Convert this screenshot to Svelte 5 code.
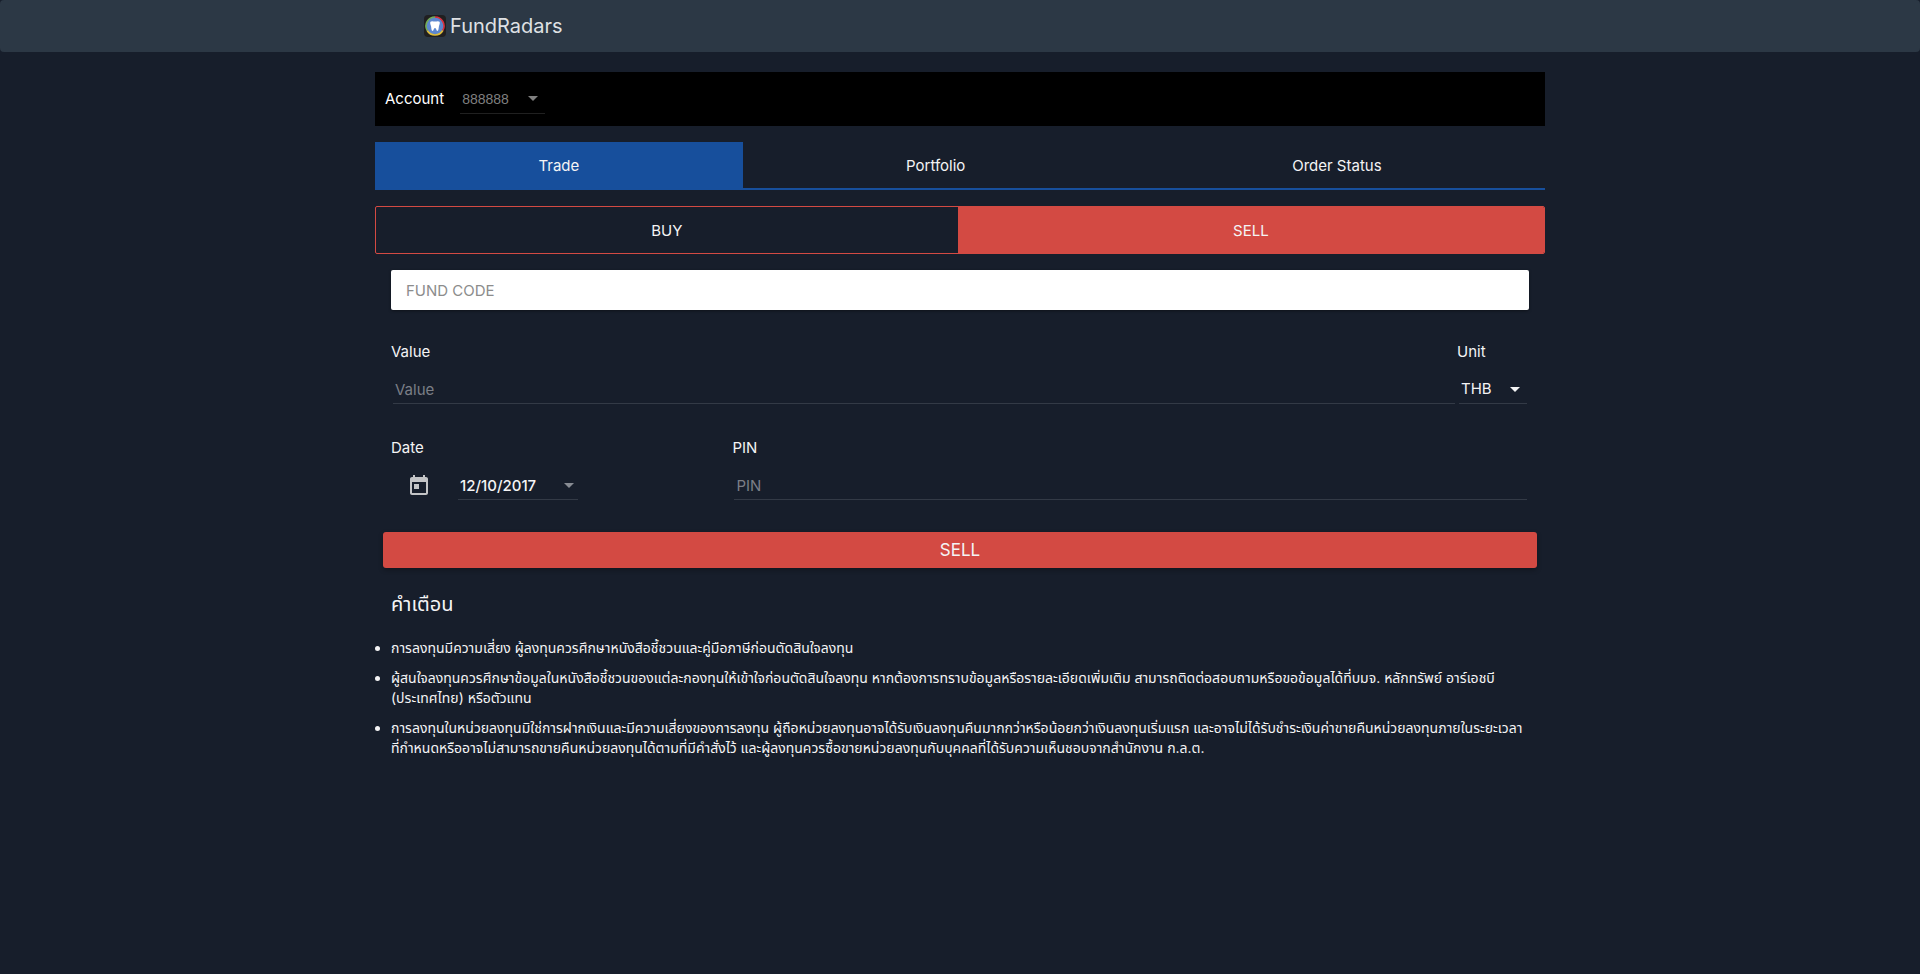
<script>
	let account = $state('888888');
	let tab = $state('Trade');
	let side = $state('SELL');
	let fundCode = $state('');
	let value = $state('');
	let unit = $state('THB');
	let date = $state('12/10/2017');
	let pin = $state('');

	const tabs = ['Trade', 'Portfolio', 'Order Status'];
	const sides = ['BUY', 'SELL'];
	const warnings = [
		['การลงทุนมีความเสี่ยง ผู้ลงทุนควรศึกษาหนังสือชี้ชวนและคู่มือภาษีก่อนตัดสินใจลงทุน'],
		[
			'ผู้สนใจลงทุนควรศึกษาข้อมูลในหนังสือชี้ชวนของแต่ละกองทุนให้เข้าใจก่อนตัดสินใจลงทุน หากต้องการทราบข้อมูลหรือรายละเอียดเพิ่มเติม สามารถติดต่อสอบถามหรือขอข้อมูลได้ที่บมจ. หลักทรัพย์ อาร์เอชบี',
			'(ประเทศไทย) หรือตัวแทน'
		],
		[
			'การลงทุนในหน่วยลงทุนมิใช่การฝากเงินและมีความเสี่ยงของการลงทุน ผู้ถือหน่วยลงทุนอาจได้รับเงินลงทุนคืนมากกว่าหรือน้อยกว่าเงินลงทุนเริ่มแรก และอาจไม่ได้รับชำระเงินค่าขายคืนหน่วยลงทุนภายในระยะเวลา',
			'ที่กำหนดหรืออาจไม่สามารถขายคืนหน่วยลงทุนได้ตามที่มีคำสั่งไว้ และผู้ลงทุนควรซื้อขายหน่วยลงทุนกับบุคคลที่ได้รับความเห็นชอบจากสำนักงาน ก.ล.ต.'
		]
	];
</script>

<header>
	<div class="container">
		<a class="brand" href="/">
			<svg width="22" height="22" viewBox="0 0 22 22" aria-hidden="true">
				<rect width="22" height="22" rx="4" fill="#201f20" />
				<circle cx="11" cy="11" r="9" fill="#5c87cf" />
				<g fill="none" stroke-width="1.6">
					<path d="M11 2a9 9 0 0 1 7.8 13.5" stroke="#d8303f" />
					<path d="M18.8 15.5a9 9 0 0 1-15.6 0" stroke="#dfbd3b" />
					<path d="M3.2 15.5A9 9 0 0 1 11 2" stroke="#74ad58" />
				</g>
				<path
					d="M6.5 6.8C7.5 5.6 9.5 6.4 11 6.6c1.500-.2 3.500-1 4.500.2.900 1.400-.3 3.200-.6 4.700-.2 1.400-.4 4.500-1.500 4.500-1.200 0-.9-3-2.400-3s-1.200 3-2.400 3c-1.100 0-1.300-3.100-1.500-4.500-.3-1.500-1.500-3.300-.6-4.700z"
					fill="#fff"
				/>
			</svg>
			<span>FundRadars</span>
		</a>
	</div>
</header>

<main class="container">
	<div class="account">
		<label for="account">Account</label>
		<div class="select muted">
			<select id="account" bind:value={account}>
				<option>888888</option>
			</select>
			<svg class="caret" viewBox="0 0 10 5" aria-hidden="true"><path d="M0 0h10L5 5z" /></svg>
		</div>
	</div>

	<nav class="tabs">
		{#each tabs as name}
			<button class:active={tab === name} onclick={() => (tab = name)}>{name}</button>
		{/each}
	</nav>

	<div class="sides">
		{#each sides as name}
			<button class:active={side === name} onclick={() => (side = name)}>{name}</button>
		{/each}
	</div>

	<form onsubmit={(e) => e.preventDefault()}>
		<input class="fund" type="text" aria-label="Fund code" placeholder="FUND CODE" bind:value={fundCode} />

		<div class="row">
			<div class="field grow">
				<label for="value">Value</label>
				<input class="line" id="value" type="text" placeholder="Value" bind:value />
			</div>
			<div class="field unit">
				<label for="unit">Unit</label>
				<div class="select">
					<select id="unit" bind:value={unit}>
						<option>THB</option>
						<option>Unit</option>
					</select>
					<svg class="caret" viewBox="0 0 10 5" aria-hidden="true"><path d="M0 0h10L5 5z" /></svg>
				</div>
			</div>
		</div>

		<div class="row">
			<div class="field date">
				<label for="date">Date</label>
				<div class="picker">
					<button type="button" class="calendar" aria-label="Open calendar">
						<svg width="24" height="24" viewBox="0 0 24 24" aria-hidden="true">
							<path
								d="M19 3h-1V1h-2v2H8V1H6v2H5c-1.110 0-1.990.9-1.990 2L3 19c0 1.100.890 2 2 2h14c1.100 0 2-.9 2-2V5c0-1.100-.9-2-2-2zm0 16H5V8h14v11zM7 10h5v5H7z"
							/>
						</svg>
					</button>
					<div class="select day">
						<input id="date" type="text" bind:value={date} />
						<svg class="caret" viewBox="0 0 10 5" aria-hidden="true"><path d="M0 0h10L5 5z" /></svg>
					</div>
				</div>
			</div>
			<div class="field grow">
				<label for="pin">PIN</label>
				<input class="line" id="pin" type="password" placeholder="PIN" bind:value={pin} />
			</div>
		</div>

		<button class="submit">{side}</button>
	</form>

	<section>
		<h2>คำเตือน</h2>
		<ul>
			{#each warnings as lines}
				<li>
					{#each lines as line}<span>{line}</span>{/each}
				</li>
			{/each}
		</ul>
	</section>
</main>

<style>
	:global(body) {
		background: #171e2b;
	}

	header,
	main {
		color: #f4f4f5;
		font-family: Inter, 'Noto Sans Thai', 'Noto Sans', sans-serif;
		font-size: 15px;
		line-height: 20px;
	}

	header {
		background: #2c3845;
		border-radius: 4px;
	}

	.container {
		max-width: 1170px;
		margin: 0 auto;
	}

	.brand {
		display: inline-flex;
		align-items: center;
		gap: 4px;
		height: 52px;
		margin-left: 49px;
		color: #dfe1e4;
		font-size: 20px;
		text-decoration: none;
	}

	button,
	input,
	select {
		box-sizing: border-box;
		margin: 0;
		padding: 0;
		border: 0;
		border-radius: 0;
		outline: 0;
		background: none;
		color: inherit;
		font: inherit;
	}

	button {
		cursor: pointer;
	}

	.account {
		display: flex;
		align-items: center;
		gap: 16px;
		height: 54px;
		margin-top: 20px;
		padding: 0 10px;
		background: #000;
		color: #fff;
	}

	.select {
		display: flex;
		align-items: center;
		height: 28px;
		border-bottom: 1px solid #333a46;
	}

	.select select,
	.select input {
		flex: 1;
		min-width: 0;
		height: 28px;
		margin-right: -20px;
		padding: 0 24px 0 2px;
		appearance: none;
	}

	.caret {
		flex: none;
		width: 10px;
		height: 5px;
		margin-right: 7px;
		fill: currentColor;
		pointer-events: none;
	}

	.muted {
		width: 85px;
		border-color: #202020;
		color: #7f7f7f;
		font-family: 'Liberation Sans', Arial, sans-serif;
		font-size: 14px;
	}

	.tabs,
	.sides {
		display: flex;
		height: 48px;
		margin-top: 16px;
	}

	.tabs {
		box-sizing: border-box;
		border-bottom: 2px solid #174f9c;
	}

	.sides {
		box-sizing: border-box;
		overflow: hidden;
		border: 1px solid #d34a43;
		border-radius: 2px;
	}

	.tabs button,
	.sides button {
		flex: 1 1 auto;
		padding-top: 2px;
	}

	.tabs .active {
		background: #174f9c;
	}

	.sides .active {
		background: #d34a43;
	}

	form {
		padding: 16px 8px 0;
	}

	.fund {
		display: block;
		width: calc(100% - 16px);
		height: 40px;
		margin: 0 8px;
		padding: 0 15px;
		border-radius: 2px;
		background: #fff;
		color: #333;
		box-shadow: 0 1px 3px rgba(0, 0, 0, 0.4);
	}

	.fund::placeholder {
		color: #8c8c8c;
	}

	.row {
		display: flex;
		padding: 32px 8px 0;
	}

	.row + .row {
		padding-top: 34px;
	}

	.field > label {
		display: block;
		margin-bottom: 13px;
	}

	.grow {
		flex: 1;
	}

	.line {
		display: block;
		width: calc(100% - 4px);
		height: 29px;
		margin: 0 2px;
		padding: 0 2px;
		border-bottom: 1px solid #333a46;
	}

	.line::placeholder {
		color: #7b7f87;
		opacity: 1;
	}

	.unit {
		width: 72px;
	}

	.unit .select {
		margin: 0 2px;
	}

	.date {
		width: 30%;
	}

	.picker {
		display: flex;
		align-items: center;
		padding-left: 16px;
	}

	.calendar {
		height: 24px;
		margin-right: 27px;
		fill: #c3c4c6;
	}

	.day {
		width: 120px;
		font-weight: 500;
	}

	.day .caret {
		fill: #888c93;
		margin-right: 4px;
	}

	.submit {
		width: 100%;
		height: 36px;
		margin-top: 32px;
		border-radius: 3px;
		background: #d34a43;
		box-shadow: 0 2px 5px rgba(0, 0, 0, 0.3);
		font-size: 17px;
	}

	h2 {
		margin: 24px 16px 0;
		font-size: 20px;
		font-weight: 400;
		line-height: 24px;
	}

	ul {
		margin: 22px 0 0;
		padding-left: 16px;
	}

	li {
		margin-bottom: 10px;
		font-size: 14px;
	}

	li span {
		display: block;
	}
</style>
